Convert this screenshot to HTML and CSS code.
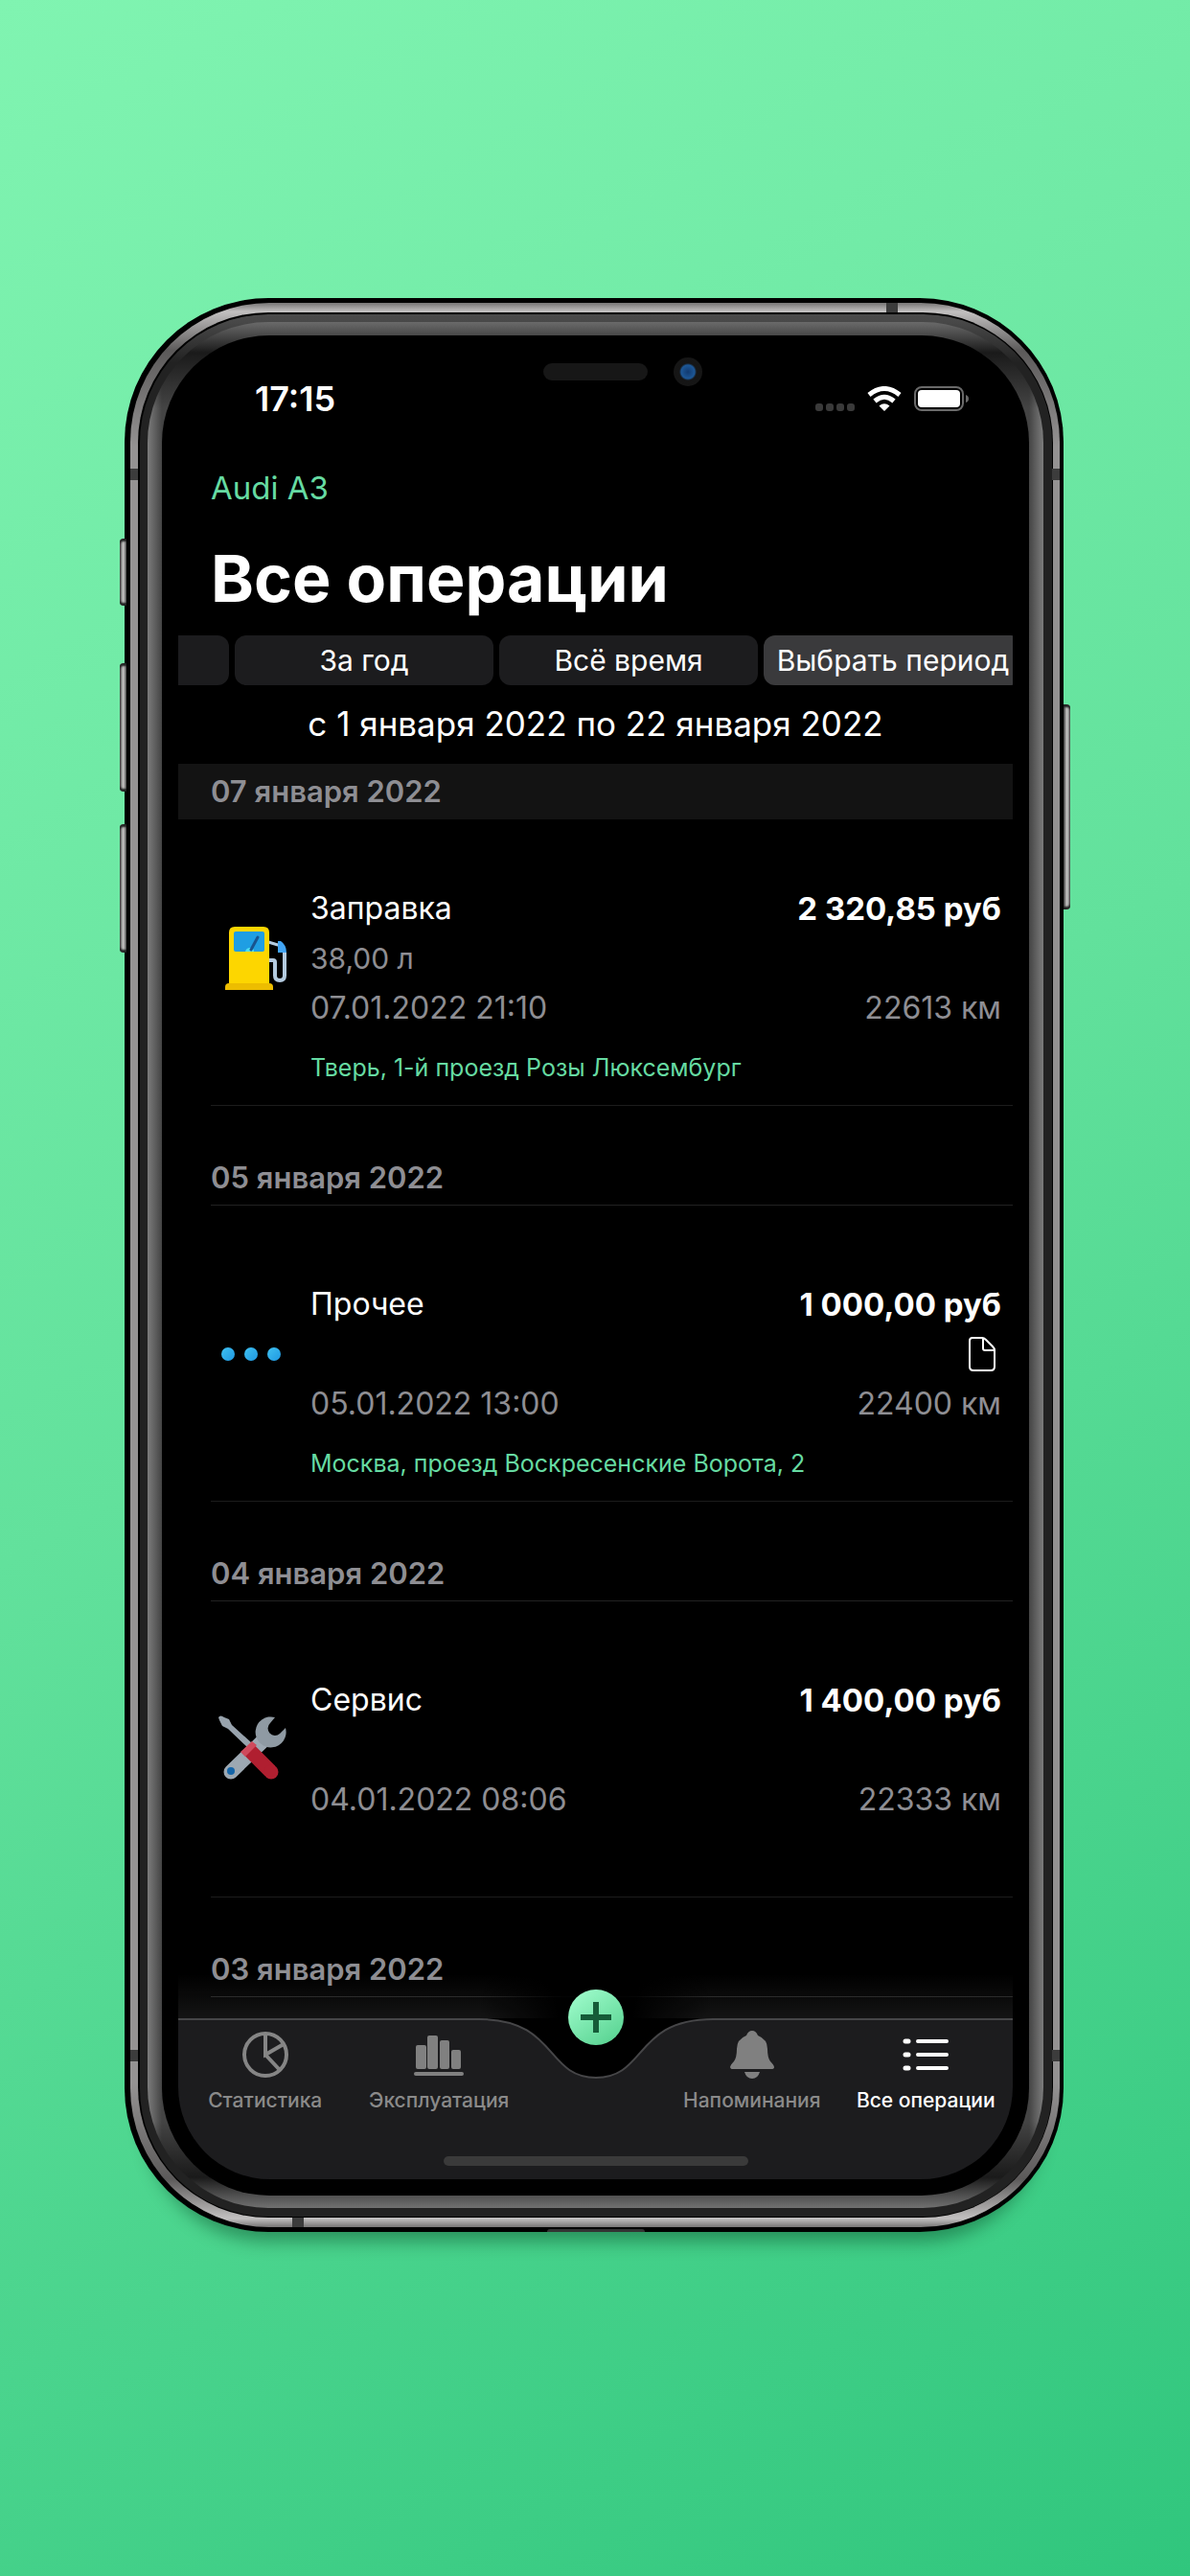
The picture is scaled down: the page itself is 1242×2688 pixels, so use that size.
FILE: index.html
```html
<!DOCTYPE html>
<html lang="ru">
<head>
<meta charset="utf-8">
<meta name="viewport" content="width=device-width, initial-scale=1">
<title>Все операции</title>
<link rel="stylesheet" href="styles.css">
</head>
<body>
<div class="phone">
  <span class="key key-mute"></span>
  <span class="key key-up"></span>
  <span class="key key-down"></span>
  <span class="key key-power"></span>
  <span class="port"></span>
  <div class="metal">
    <span class="band band-top"></span>
    <span class="band band-bottom"></span>
    <span class="band band-side band-lt"></span>
    <span class="band band-side band-rt"></span>
    <span class="band band-side band-lb"></span>
    <span class="band band-side band-rb"></span>
    <div class="seam"><div class="rim"><div class="bevel"><div class="glass">
      <div class="screen">
        <div class="notch">
          <span class="speaker"></span>
          <span class="camera"></span>
        </div>
        <div class="statusbar">
          <span class="clock">17:15</span>
          <span class="indicators">
            <svg width="41" height="8" viewBox="0 0 41 8" fill="#3a3a3a"><rect width="8" height="8" rx="3"/><rect x="11" width="8" height="8" rx="3"/><rect x="22" width="8" height="8" rx="3"/><rect x="33" width="8" height="8" rx="3"/></svg>
            <svg width="36" height="26" viewBox="0 0 36 26" fill="none" stroke="#fff" stroke-width="5"><path d="M2 9Q18-4 34 9"/><path d="M8 15.500Q18 7 28 15.500"/><path d="M18 26L12.500 20.500Q18 16 23.500 20.500Z" fill="#fff" stroke="none"/></svg>
            <svg width="57" height="26" viewBox="0 0 57 26"><rect x="1" y="1" width="50" height="24" rx="7" fill="none" stroke="#6a6a6a" stroke-width="2"/><rect x="4" y="4" width="44" height="18" rx="4" fill="#fff"/><path d="M54 9q3 1 3 4t-3 4z" fill="#6a6a6a"/></svg>
          </span>
        </div>
        <header class="head">
          <a class="car" href="#car">Audi A3</a>
          <h1>Все операции</h1>
        </header>
        <div class="periods">
          <button class="chip" type="button" aria-label="За месяц"></button>
          <button class="chip" type="button">За год</button>
          <button class="chip" type="button">Всё время</button>
          <button class="chip chip-active" type="button">Выбрать период</button>
        </div>
        <p class="range">с 1 января 2022 по 22 января 2022</p>
        <main>
          <section class="day day-pinned">
            <h2>07 января 2022</h2>
            <article class="entry">
              <svg class="icon" viewBox="0 0 84 72">
                <path d="M60 19l10 3" stroke="#b4cbdf" stroke-width="3" stroke-linecap="round"/>
                <path d="M60 38h5q2 0 2 2v14q0 5 5 5t5-5V30" fill="none" stroke="#b4cbdf" stroke-width="4"/>
                <path d="M70 18h3q6 4 6 12h-9z" fill="#42a5f5"/>
                <path d="M19 64V9q0-6 6-6h30q6 0 6 6v55z" fill="#fdd600"/>
                <path d="M15 69v-3q0-4 4-4h42q4 0 4 4v3z" fill="#edbd00"/>
                <rect x="24" y="8" width="32" height="21" rx="2" fill="#1f9ee3"/>
                <path d="M36 29q1-4 5-4t4 4z" fill="#4de3f5"/>
                <path d="M42 27L49 14" stroke="#18548f" stroke-width="3" stroke-linecap="round"/>
              </svg>
              <span class="name">Заправка</span><strong class="sum">2 320,85 руб</strong>
              <span class="volume">38,00 л</span>
              <time class="when">07.01.2022 21:10</time><span class="odo">22613 км</span>
              <a class="place" href="#place">Тверь, 1-й проезд Розы Люксембург</a>
            </article>
          </section>
          <section class="day">
            <h2>05 января 2022</h2>
            <article class="entry">
              <svg class="icon" viewBox="0 0 84 72"><defs><linearGradient id="dot" x2="1" y2="1"><stop stop-color="#3fc2f2"/><stop offset="1" stop-color="#1f97e0"/></linearGradient></defs><g fill="url(#dot)"><circle cx="18" cy="36" r="7"/><circle cx="42" cy="36" r="7"/><circle cx="66" cy="36" r="7"/></g></svg>
              <span class="name">Прочее</span><strong class="sum">1 000,00 руб</strong>
              <svg class="doc" width="30" height="38" viewBox="0 0 30 38" fill="none" stroke="#fff" stroke-width="2" stroke-linejoin="round"><path d="M5 2h10q2 0 4 2l7 7q2 2 2 4v17q0 4-4 4H6q-4 0-4-4V5q0-3 3-3z"/><path d="M16 2v11q0 2 2 2h10"/></svg>
              <time class="when">05.01.2022 13:00</time><span class="odo">22400 км</span>
              <a class="place" href="#place">Москва, проезд Воскресенские Ворота, 2</a>
            </article>
          </section>
          <section class="day">
            <h2>04 января 2022</h2>
            <article class="entry">
              <svg class="icon" viewBox="0 0 84 72">
                <path d="M21 59L54 27" stroke="#9da8b2" stroke-width="15" stroke-linecap="round"/>
                <path d="M67 2A16 16 0 1 0 78 13L72 19A7 7 0 1 1 62 8Z" fill="#8f9aa3"/>
                <circle cx="21" cy="58" r="4" fill="#1565a8"/>
                <path d="M8 2q2-3 6 0l5 2 3 6L43 29l-4 5L18 14l-6-3-3-6z" fill="#98a3ad"/>
                <path d="M38 34L62 58" stroke="#b01f30" stroke-width="15"/>
                <circle cx="63" cy="59" r="7.500" fill="#b01f30"/>
                <path d="M31 38L43 27l5 4-12 12z" fill="#cf4a5c"/>
              </svg>
              <span class="name">Сервис</span><strong class="sum">1 400,00 руб</strong>
              <time class="when">04.01.2022 08:06</time><span class="odo">22333 км</span>
            </article>
          </section>
          <section class="day">
            <h2>03 января 2022</h2>
          </section>
        </main>
        <nav class="tabbar">
          <div class="shape">
            <span class="flat"></span>
            <svg width="244" height="168" viewBox="0 0 244 168"><path d="M0 1C82 1 69 62 122 62S162 1 244 1V168H0Z" fill="#1c1c1e"/><path d="M0 1C82 1 69 62 122 62S162 1 244 1" fill="none" stroke="#464648" stroke-width="2"/></svg>
            <span class="flat"></span>
          </div>
          <button class="add" type="button" aria-label="Добавить"><svg width="34" height="34" viewBox="0 0 34 34" stroke="#155c38" stroke-width="6"><path d="M17 1v32M1 17h32"/></svg></button>
          <div class="tabs">
            <a class="tab" href="#stats"><svg width="52" height="52" viewBox="0 0 52 52" fill="none" stroke="#858585" stroke-width="4"><circle cx="26" cy="26" r="22"/><path d="M26 4v22l19-11M26 26l15 16"/></svg>Статистика</a>
            <a class="tab" href="#usage"><svg width="52" height="52" viewBox="0 0 52 52" fill="#808080"><rect x="2" y="16" width="11" height="25" rx="2"/><rect x="14" y="6" width="11" height="35" rx="2"/><rect x="27" y="11" width="10" height="30" rx="2"/><rect x="39" y="21" width="10" height="20" rx="2"/><rect y="44" width="52" height="4" rx="2"/></svg>Эксплуатация</a>
            <span></span>
            <a class="tab" href="#reminders"><svg width="52" height="52" viewBox="0 0 52 52" fill="#808080"><path d="M20 6q2-5 6-5t6 5q10 4 10 14 0 9 3 13 4 4 4 6 0 2-3 2H6q-3 0-3-2 0-2 4-6 3-4 3-13Q10 10 20 6z"/><path d="M18 44h16q-2 7-8 7t-8-7z"/></svg>Напоминания</a>
            <a class="tab tab-active" href="#all"><svg width="52" height="52" viewBox="0 0 52 52" stroke="#fff" stroke-width="4" stroke-linecap="round"><path d="M18 12h30M18 26h30M18 40h30"/><path stroke-width="5" d="M5 12h3M5 26h3M5 40h3"/></svg>Все операции</a>
          </div>
          <span class="homebar"></span>
        </nav>
      </div>
    </div></div></div></div>
  </div>
</div>
</body>
</html>
```
FILE: styles.css
```css
* { box-sizing: border-box; }
body {
  margin: 0;
  min-height: 100vh;
  padding: 311px 132px 359px 130px;
  background: linear-gradient(150deg, #80f4b1 0%, #62e19c 48%, #30c67d 100%);
  color: #fff;
  font-family: Inter, "Noto Sans", "Liberation Sans", sans-serif;
}
h1, h2, p { margin: 0; }
a { color: inherit; text-decoration: none; }
button { border: 0; padding: 0; font: inherit; color: inherit; }

/* Device body, from the outer edge inwards */
.phone {
  position: relative;
  max-width: 980px;
  margin: 0 auto;
  padding: 5px 4px 5px 6px;
  border-radius: 150px;
  background: #000;
  box-shadow: 0 32px 18px -22px rgba(0, 50, 25, .4);
}
.metal {
  position: relative;
  padding: 10px 7px 10px 8px;
  border-radius: 145px;
  background: linear-gradient(to bottom, #777575 0, #c2c0c0 9px, #5c5a5a 50px, #949292 150px, #949292 calc(100% - 150px), #5c5a5a calc(100% - 50px), #c2c0c0 calc(100% - 9px), #777575 100%);
}
.seam { padding: 2px 1px 1px 2px; border-radius: 136px; background: #000; }
.rim {
  padding: 8px 9px 9px 8px;
  border-radius: 134px;
  background: linear-gradient(to bottom, #4a4a4a 0, #484848 8px, #222 50px);
}
.bevel {
  padding: 14px 15px 13px;
  border-radius: 126px;
  background:
    linear-gradient(to bottom, #6a6a6a 0, #484848 14px, #1a1a1a 32px, transparent 90px, transparent calc(100% - 90px), #1a1a1a calc(100% - 32px), #505050 calc(100% - 13px), #707070 100%),
    linear-gradient(to right, #7c7c7c 0, #444 15px, #444 calc(100% - 15px), #7c7c7c 100%);
}
.glass { padding: 16px 17px 17px; border-radius: 112px; background: #000; }
.screen { position: relative; border-radius: 96px; overflow: hidden; background: #000; }

.key { position: absolute; left: -5px; width: 7px; border-radius: 4px 0 0 4px; background: linear-gradient(to right, #555, #c2c0c0 50%, #777); box-shadow: inset 0 3px 2px #222, inset 0 -3px 2px #222; }
.key-mute { top: 251px; height: 70px; }
.key-up { top: 381px; height: 134px; }
.key-down { top: 549px; height: 134px; }
.key-power { top: 424px; height: 214px; left: auto; right: -7px; border-radius: 0 4px 4px 0; }
.port { position: absolute; bottom: 0; left: 45%; width: 102px; height: 3px; border-radius: 3px 3px 0 0; background: #333; }
.band { position: absolute; background: #3c3c3c; }
.band-top { top: 0; right: 169px; width: 12px; height: 10px; }
.band-bottom { bottom: 0; left: 169px; width: 12px; height: 10px; }
.band-side { width: 8px; height: 12px; }
.band-lt, .band-rt { top: 173px; }
.band-lb, .band-rb { bottom: 173px; }
.band-lt, .band-lb { left: 0; }
.band-rt, .band-rb { right: 0; }

.notch { position: absolute; top: 7px; left: 0; right: 0; display: flex; justify-content: center; align-items: center; gap: 27px; padding-left: 56px; }
.speaker { width: 109px; height: 18px; border-radius: 9px; background: #171717; }
.camera { width: 30px; height: 30px; border-radius: 50%; background: radial-gradient(circle at 50% 50%, #123a70 0, #1d5796 7px, #151515 9px, #161616 15px); }

.statusbar { display: flex; justify-content: space-between; align-items: center; height: 100px; padding: 0 46px 0 80px; }
.clock { font-size: 36px; font-weight: 600; }
.indicators { display: flex; align-items: center; gap: 13px; }
.indicators svg:first-child { margin-top: 18px; }

.head { display: flex; flex-direction: column; align-items: flex-start; padding: 23px 34px 17px; }
.car { font-size: 33px; line-height: 40px; color: #66dba2; }
h1 { margin-top: 32px; margin-bottom: 1px; font-size: 68px; line-height: 84px; font-weight: 700; }

.periods { display: flex; justify-content: flex-end; gap: 6px; margin-right: -10px; }
.chip { flex: 0 0 270px; height: 52px; border-radius: 12px; background: #1c1c1e; font-size: 30px; white-space: nowrap; }
.chip-active { background: #3a3a3c; }
.range { padding-bottom: 2px; font-size: 35px; line-height: 80px; text-align: center; }

.day { margin-bottom: 46px; }
.day:last-child { margin-bottom: 22px; }
h2 { height: 58px; margin-left: 34px; border-bottom: 1px solid #222; font-size: 31px; line-height: 58px; font-weight: 600; color: #8e8e93; }
.day-pinned h2 { margin-left: 0; padding-left: 34px; border: 0; background: #131313; }
.entry {
  display: grid;
  grid-template-columns: 84px 1fr auto;
  grid-template-rows: repeat(3, 52px) 62px;
  column-gap: 20px;
  align-items: center;
  margin-left: 34px;
  padding: 77px 12px 13px 0;
  border-bottom: 1px solid #1c1c1c;
  font-size: 32px;
  line-height: 52px;
}
.day-pinned .entry { padding-top: 67px; }
.icon { grid-area: 1 / 1 / 4 / 2; width: 84px; height: 72px; }
.name { grid-area: 1 / 2; }
.sum { grid-area: 1 / 3; font-size: 33px; font-weight: 700; }
.volume { grid-area: 2 / 2; font-size: 30px; color: #8e8e93; }
.doc { grid-area: 2 / 3; justify-self: end; margin-right: 5px; }
.when { grid-area: 3 / 2; color: #8e8e93; }
.odo { grid-area: 3 / 3; justify-self: end; color: #8e8e93; }
.place { grid-area: 4 / 2 / 5 / 4; align-self: end; font-size: 25px; color: #66dba2; }

.tabbar { position: relative; height: 168px; }
.tabbar::before { content: ""; position: absolute; left: 0; right: 0; bottom: 100%; height: 48px; background: linear-gradient(to right, transparent 0, transparent 36%, #000 46%, #000 54%, transparent 64%), linear-gradient(to top, rgba(255, 255, 255, .09), transparent); opacity: .9; }
.shape { position: absolute; inset: 0; display: flex; }
.flat { flex: 1; background: #1c1c1e; border-top: 2px solid #464648; }
.add { position: absolute; left: 50%; top: -30px; width: 58px; height: 58px; margin-left: -29px; border-radius: 50%; background: linear-gradient(145deg, #a4ffd0, #52cf8c); display: grid; place-items: center; }
.tabs { position: relative; display: grid; grid-template-columns: 5fr 5fr 4fr 5fr 5fr; padding-top: 12px; }
.tab { display: flex; flex-direction: column; align-items: center; gap: 8px; font-size: 21px; line-height: 28px; font-weight: 500; color: #8a8a8a; white-space: nowrap; }
.tab-active { color: #fff; }
.homebar { position: absolute; left: 50%; bottom: 14px; width: 318px; height: 10px; margin-left: -159px; border-radius: 5px; background: #3a3a3a; }
```
